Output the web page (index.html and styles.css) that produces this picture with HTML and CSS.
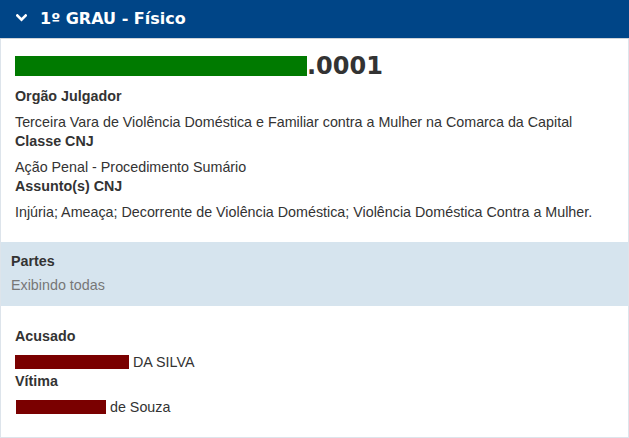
FILE: index.html
```html
<!DOCTYPE html>
<html lang="pt-BR">
<head>
<meta charset="utf-8">
<title>1º GRAU - Físico</title>
<link rel="stylesheet" href="styles.css">
</head>
<body>
<div class="panel">
  <div class="panel-header">
    <svg class="chevron" width="11" height="8" viewBox="0 0 11 8"><polyline points="1.3,1.5 5.5,5.7 9.7,1.5" fill="none" stroke="#fff" stroke-width="2.6" stroke-linecap="square"/></svg>
    <span class="panel-title">1º GRAU - Físico</span>
  </div>
  <div class="section">
    <div class="number-row"><span class="mask mask-green"></span><span class="number">.0001</span></div>
    <div class="label">Orgão Julgador</div>
    <div class="value">Terceira Vara de Violência Doméstica e Familiar contra a Mulher na Comarca da Capital</div>
    <div class="label">Classe CNJ</div>
    <div class="value">Ação Penal - Procedimento Sumário</div>
    <div class="label">Assunto(s) CNJ</div>
    <div class="value">Injúria; Ameaça; Decorrente de Violência Doméstica; Violência Doméstica Contra a Mulher.</div>
  </div>
  <div class="partes">
    <div class="partes-title">Partes</div>
    <div class="partes-sub">Exibindo todas</div>
  </div>
  <div class="section section-partes">
    <div class="label">Acusado</div>
    <div class="value"><span class="mask mask-red mask-1"></span> DA SILVA</div>
    <div class="label">Vítima</div>
    <div class="value"><span class="mask mask-red mask-2"></span> de Souza</div>
  </div>
</div>
</body>
</html>
```

FILE: styles.css
```css
html, body {
  margin: 0;
  padding: 0;
  background: #fff;
}
body {
  font-family: "Liberation Sans", Arial, sans-serif;
  font-size: 14.3px;
  color: #333;
  overflow: hidden;
}
.panel {
  width: 629px;
  box-sizing: border-box;
  border-left: 1px solid #dde4eb;
  border-right: 1px solid #dde4eb;
  border-bottom: 1px solid #dde4eb;
}
.panel-header {
  margin: 0 -1px;
  height: 38px;
  background: #004587;
  border-bottom: 1px solid #cfd4d9;
  display: flex;
  align-items: center;
  padding-left: 16px;
}
.chevron {
  display: block;
  margin-top: -2px;
}
.panel-title {
  margin-left: 13px;
  font-family: "DejaVu Sans", sans-serif;
  font-weight: bold;
  font-size: 16px;
  line-height: 38px;
  color: #fff;
}
.section {
  padding: 12px 14px 20px 14px;
}
.number-row {
  height: 30px;
  display: flex;
  align-items: center;
}
.mask {
  display: inline-block;
}
.mask-green {
  width: 292px;
  height: 20px;
  background: #007a00;
}
.number {
  font-family: "DejaVu Sans", sans-serif;
  font-weight: bold;
  font-size: 24px;
  line-height: 30px;
  color: #333;
}
.label {
  font-weight: bold;
  line-height: 19px;
}
.number-row + .label {
  margin-top: 6px;
}
.value {
  line-height: 20px;
  margin-top: 6px;
}
.partes {
  background: #d6e4ee;
  padding: 10px;
  height: 44px;
}
.partes-title {
  font-weight: bold;
  line-height: 19px;
}
.partes-sub {
  color: #777;
  line-height: 20px;
  margin-top: 4px;
}
.section-partes {
  padding-top: 21px;
  padding-left: 14px;
}
.mask-red {
  height: 14px;
  background: #7a0000;
  vertical-align: -2px;
}
.mask-1 {
  width: 114px;
}
.mask-2 {
  width: 90px;
  margin-left: 1px;
}
```
